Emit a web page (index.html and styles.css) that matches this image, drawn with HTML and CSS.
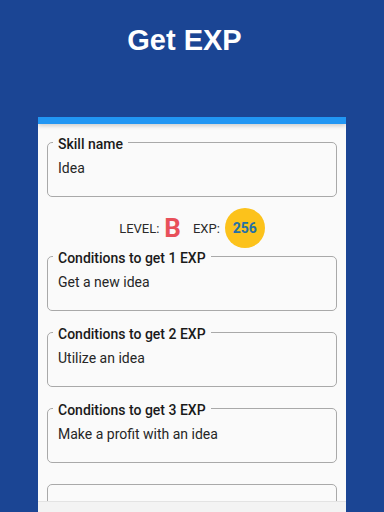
FILE: index.html
```html
<!DOCTYPE html>
<html>
<head>
<meta charset="utf-8">
<link rel="stylesheet" href="styles.css">
</head>
<body>
<header class="header"><h1 class="title">Get EXP</h1></header>
<main class="card">
  <div class="strip"></div>
  <div class="content">
    <fieldset class="field">
      <legend class="label">Skill name</legend>
      <div class="value">Idea</div>
    </fieldset>
    <div class="level-row">
      <span class="lv-label">LEVEL:</span>
      <span class="grade">B</span>
      <span class="exp-label">EXP:</span>
      <span class="exp-badge">256</span>
    </div>
    <fieldset class="field">
      <legend class="label">Conditions to get 1 EXP</legend>
      <div class="value">Get a new idea</div>
    </fieldset>
    <fieldset class="field">
      <legend class="label">Conditions to get 2 EXP</legend>
      <div class="value">Utilize an idea</div>
    </fieldset>
    <fieldset class="field">
      <legend class="label">Conditions to get 3 EXP</legend>
      <div class="value">Make a profit with an idea</div>
    </fieldset>
    <fieldset class="field field-empty">
      <div class="value">&nbsp;</div>
    </fieldset>
  </div>
  <div class="bottom-bar"></div>
</main>
</body>
</html>
```
FILE: styles.css
```css
html, body {
  margin: 0;
  padding: 0;
}
body {
  width: 384px;
  height: 512px;
  background: #1b4594;
  display: flex;
  flex-direction: column;
  align-items: center;
  overflow: hidden;
  font-family: Roboto, "Noto Sans", sans-serif;
}
.header {
  height: 117px;
  width: 100%;
  box-sizing: border-box;
  padding: 23px 15px 0 0;
  text-align: center;
}
.title {
  margin: 0;
  color: #ffffff;
  font-family: "Liberation Sans", Arial, sans-serif;
  font-weight: bold;
  font-size: 29px;
  line-height: 34px;
}
.card {
  width: 308px;
  flex: 1;
  min-height: 0;
  background: #fafafa;
  display: flex;
  flex-direction: column;
  overflow: hidden;
}
.strip {
  height: 7px;
  background: #2196f3;
  box-shadow: 0 2px 4px rgba(0, 0, 0, 0.18);
  position: relative;
  z-index: 1;
  flex: none;
}
.content {
  flex: 1;
  min-height: 0;
  overflow: hidden;
  padding: 8px 9px 0;
  display: flex;
  flex-direction: column;
  gap: 11px;
}
.field {
  margin: 0;
  padding: 6px 10px 18px;
  border: 1px solid #a9a9a9;
  border-radius: 5px;
  min-inline-size: 0;
  flex: none;
}
.field-empty {
  margin-top: 10px;
  padding-top: 16px;
}
.label {
  margin-left: -5px;
  padding: 4px 5px 0;
  font-size: 14px;
  line-height: 16px;
  font-weight: 500;
  color: #1a1a1a;
}
.value {
  font-size: 14px;
  line-height: 20px;
  color: #262626;
}
.level-row {
  display: flex;
  align-items: center;
  justify-content: center;
  height: 40px;
  margin: 0 0 -13px;
  color: #2a2a2a;
  font-size: 13px;
}
.grade {
  color: #e8505a;
  font-weight: bold;
  font-size: 26px;
  line-height: 30px;
  margin: 0 12px 0 5px;
}
.exp-badge {
  width: 40px;
  height: 40px;
  border-radius: 50%;
  background: #fcc21b;
  color: #2470a6;
  font-weight: bold;
  font-size: 14px;
  display: flex;
  align-items: center;
  justify-content: center;
  margin-left: 5px;
}
.bottom-bar {
  height: 10px;
  flex: none;
  background: #f3f3f3;
  border-top: 1px solid #e3e3e3;
}
```
